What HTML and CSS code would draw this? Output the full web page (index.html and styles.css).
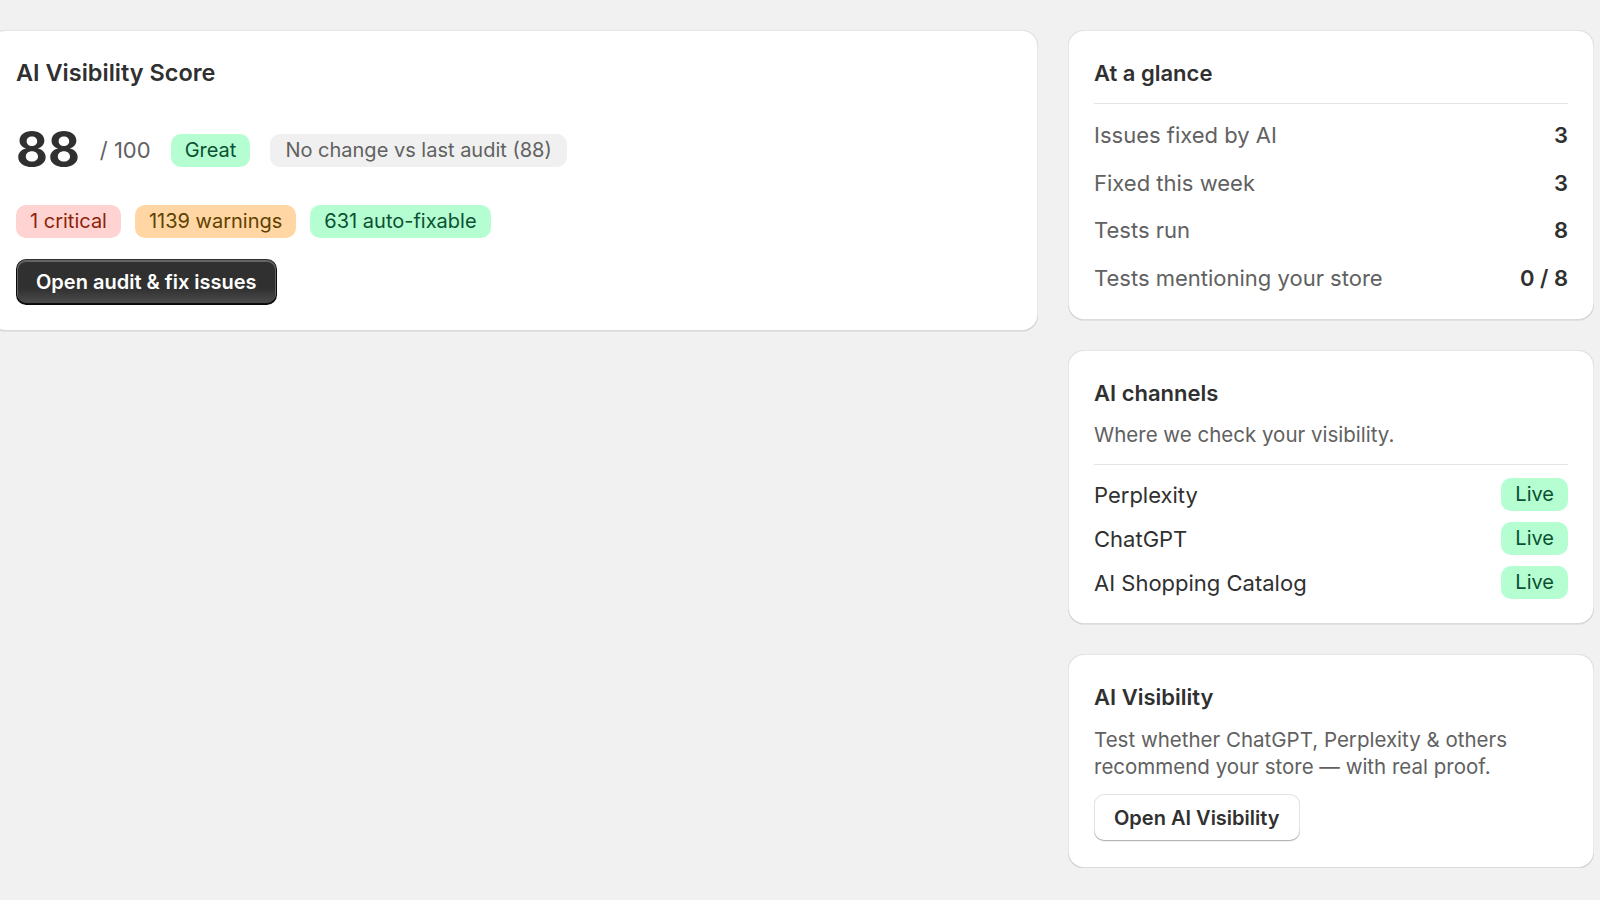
FILE: index.html
```
<!DOCTYPE html>
<html lang="en">

<head>
	<meta charset="UTF-8">
	<meta name="viewport" content="width=device-width, initial-scale=1.0">
	<title>AI Visibility</title>
	<link rel="stylesheet" href="styles.css">
</head>

<body>
	<div class="layout">
		<section class="card score-card">
			<h2>AI Visibility Score</h2>
			<div class="score-row">
				<span class="score">88</span>
				<span class="score-max">/ 100</span>
				<span class="badge badge-success">Great</span>
				<span class="badge badge-neutral">No change vs last audit (88)</span>
			</div>
			<div class="issue-row">
				<span class="badge badge-critical">1 critical</span>
				<span class="badge badge-warning">1139 warnings</span>
				<span class="badge badge-success">631 auto-fixable</span>
			</div>
			<button class="btn btn-primary">Open audit &amp; fix issues</button>
		</section>

		<aside class="side">
			<section class="card">
				<h2>At a glance</h2>
				<hr class="divider">
				<ul class="stats">
					<li><span>Issues fixed by AI</span><strong>3</strong></li>
					<li><span>Fixed this week</span><strong>3</strong></li>
					<li><span>Tests run</span><strong>8</strong></li>
					<li><span>Tests mentioning your store</span><strong>0 / 8</strong></li>
				</ul>
			</section>

			<section class="card">
				<h2>AI channels</h2>
				<p class="subtitle">Where we check your visibility.</p>
				<hr class="divider">
				<ul class="channels">
					<li><span>Perplexity</span><span class="badge badge-success">Live</span></li>
					<li><span>ChatGPT</span><span class="badge badge-success">Live</span></li>
					<li><span>AI Shopping Catalog</span><span class="badge badge-success">Live</span></li>
				</ul>
			</section>

			<section class="card promo-card">
				<h2>AI Visibility</h2>
				<p class="description">Test whether ChatGPT, Perplexity &amp; others<br>recommend your store — with real proof.</p>
				<button class="btn btn-secondary">Open AI Visibility</button>
			</section>
		</aside>
	</div>
</body>

</html>
```

FILE: styles.css
```
/* Base reset */
* {
	margin: 0;
	padding: 0;
	box-sizing: border-box;
	font-family: Inter, 'Noto Sans', sans-serif;
}

body {
	background: #f1f1f1;
	color: #303030;
	font-size: 20px;
	line-height: 28px;
}

.layout {
	display: grid;
	grid-template-columns: 1048px 526px;
	gap: 30px;
	align-items: start;
	margin: 30px 0 0 -10px;
}

.side {
	display: flex;
	flex-direction: column;
	gap: 30px;
}

.card {
	background: #fff;
	border-radius: 16px;
	padding: 25px 26px;
	box-shadow: 0 1px 0 rgba(26, 26, 26, 0.07),
		inset 0 1px 0 rgba(204, 204, 204, 0.5),
		inset 0 -1px 0 rgba(0, 0, 0, 0.14),
		inset 1px 0 0 rgba(0, 0, 0, 0.09),
		inset -1px 0 0 rgba(0, 0, 0, 0.09);
}

.card h2 {
	font-size: 22px;
	line-height: 36px;
	font-weight: 600;
	color: #303030;
}

.divider {
	border: none;
	border-top: 1px solid #e3e3e3;
}

/* Score card */
.score-card {
	padding-bottom: 26px;
}

.score-card h2 {
	font-size: 23.5px;
}

.score-row {
	display: flex;
	align-items: center;
	gap: 20px;
	margin-top: 35px;
}

.score {
	font-size: 49px;
	line-height: 48px;
	font-weight: 700;
	color: #303030;
}

.score-max {
	color: #616161;
	font-size: 22px;
}

.issue-row {
	display: flex;
	gap: 14px;
	margin-top: 31px;
}

.badge {
	display: inline-block;
	padding: 2px 14px;
	font-size: 20px;
	line-height: 29px;
	border-radius: 10px;
	white-space: nowrap;
}

.badge-success {
	background: #b4fed2;
	color: #0c5132;
}

.badge-neutral {
	background: #f0f0f0;
	color: #616161;
	padding: 2px 15px;
}

.badge-critical {
	background: #fed3d1;
	color: #8e1f0b;
}

.badge-warning {
	background: #ffd6a4;
	color: #5e4200;
}

.btn {
	display: inline-block;
	font-size: 20px;
	font-weight: 600;
	line-height: 28px;
	padding: 9px 20px;
	border-radius: 10px;
	border: none;
	cursor: pointer;
}

.btn-primary {
	margin-top: 21px;
	color: #fff;
	background: linear-gradient(180deg, rgba(48, 48, 48, 0) 63%, rgba(255, 255, 255, 0.15) 100%), #303030;
	box-shadow: inset 0 -1px 0 1px rgba(0, 0, 0, 0.8),
		inset 0 0 0 1px #303030,
		inset 0 1px 0 2px rgba(255, 255, 255, 0.25);
}

.btn-secondary {
	margin-top: 14px;
	padding: 9.5px 20px;
	color: #303030;
	background: #fff;
	box-shadow: inset 0 -1px 0 #b5b5b5,
		inset 0 0 0 1px #e3e3e3,
		0 1px 0 rgba(0, 0, 0, 0.05);
}

/* At a glance */
.card > .divider {
	margin-top: 12px;
}

.stats {
	list-style: none;
	display: flex;
	flex-direction: column;
	gap: 17.5px;
	margin-top: 16px;
	padding-bottom: 2px;
}

.stats li {
	display: flex;
	justify-content: space-between;
	font-size: 22px;
	line-height: 30px;
	color: #616161;
}

.stats strong {
	font-weight: 600;
	color: #303030;
}

/* AI channels */
.subtitle {
	margin-top: 10px;
	color: #616161;
	font-size: 20.5px;
}

.subtitle + .divider {
	margin-top: 15px;
}

.channels {
	list-style: none;
	display: flex;
	flex-direction: column;
	gap: 11px;
	margin-top: 13.5px;
}

.channels li {
	display: flex;
	justify-content: space-between;
	align-items: center;
	font-size: 22px;
}

/* AI Visibility promo */
.promo-card {
	padding-bottom: 27px;
}

.description {
	margin-top: 11px;
	color: #616161;
	font-size: 20.5px;
	line-height: 27px;
}
```
